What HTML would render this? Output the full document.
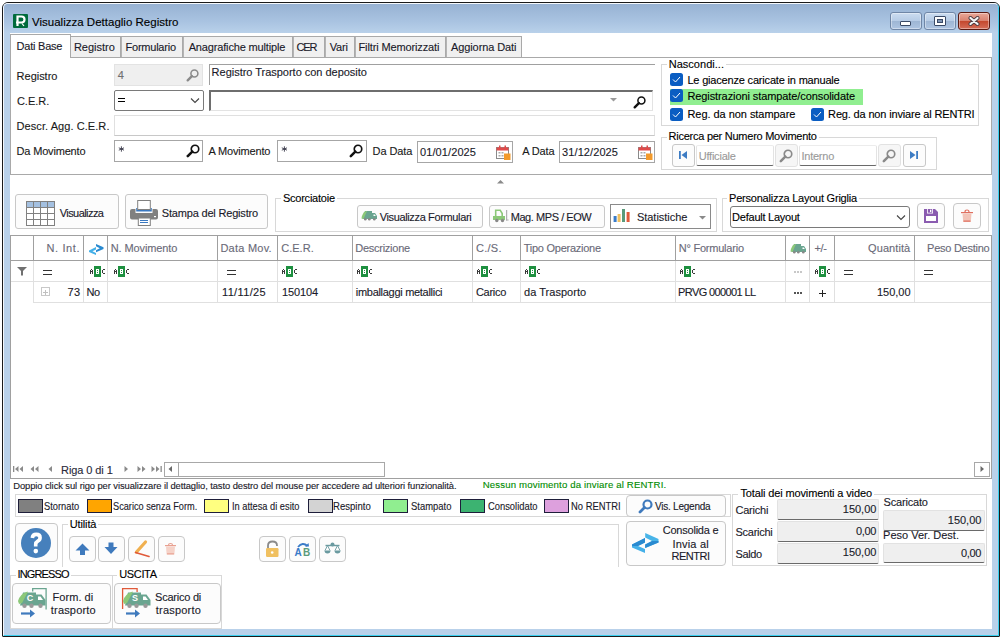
<!DOCTYPE html><html><head><meta charset="utf-8"><title>Visualizza Dettaglio Registro</title><style>
html,body{margin:0;padding:0;background:#fff;width:1001px;height:639px;overflow:hidden;position:relative;font-family:"Liberation Sans",sans-serif;}
.t{position:absolute;white-space:nowrap;line-height:1;-webkit-text-stroke:0.12px currentColor;}
.b{position:absolute;box-sizing:border-box;}
.s{position:absolute;overflow:visible;}
</style></head><body>
<div class="b" style="left:2px;top:2px;width:998px;height:635px;background:#b9d1ea;border:1px solid #1a1a1a;border-radius:6px 6px 1px 1px;"></div>
<div class="b" style="left:3px;top:3px;width:996px;height:633px;border-top:1px solid #f4f8fc;border-left:1px solid #f4f8fc;border-right:1px solid #3ad0f0;border-bottom:1px solid #3ad0f0;border-radius:5px 5px 0 0;"></div>
<div class="b" style="left:4px;top:4px;width:994px;height:29px;background:linear-gradient(#97b2d3,#a9c3e1 60%,#b9d1ea);border-radius:4px 4px 0 0;"></div>
<div class="b" style="left:10px;top:33px;width:982px;height:596px;background:#fff;"></div>
<div class="b" style="left:13px;top:14px;width:15px;height:14px;background:#006b3c;border-radius:1px;"></div>
<svg class="s" style="left:15px;top:15px;" width="11" height="12" viewBox="0 0 11 12"><path d="M2.5 11 V1.5 H6.5 Q9.5 1.5 9.5 4.5 Q9.5 7.5 6.5 7.5 H1" fill="none" stroke="#fff" stroke-width="2.2"/><path d="M7 8.5 L9 11" stroke="#fff" stroke-width="1.2"/></svg>
<div class="t" style="left:31.94px;top:17.00px;font-size:11.5px;color:#000;letter-spacing:0.013px;">Visualizza Dettaglio Registro</div>
<div class="b" style="left:890px;top:12px;width:32px;height:18px;background:linear-gradient(#cbdcf0 0%,#b7cce6 48%,#9eb6d4 52%,#aec5e2 100%);border:1px solid #6f86a6;border-radius:3px;box-shadow:inset 0 0 0 1px rgba(255,255,255,.4);"><div style="position:absolute;left:9px;top:8px;width:11px;height:5px;background:#fff;border:1px solid #3a4a66;border-radius:1px;box-sizing:border-box"></div></div>
<div class="b" style="left:924px;top:12px;width:32px;height:18px;background:linear-gradient(#cbdcf0 0%,#b7cce6 48%,#9eb6d4 52%,#aec5e2 100%);border:1px solid #6f86a6;border-radius:3px;box-shadow:inset 0 0 0 1px rgba(255,255,255,.4);"><div style="position:absolute;left:9px;top:3px;width:12px;height:10px;border:1px solid #3a4a66;background:#fff;box-sizing:border-box;border-radius:1px"><div style="position:absolute;left:2px;top:2px;width:6px;height:4px;background:#7f95b4;border:1px solid #3a4a66;box-sizing:border-box"></div></div></div>
<div class="b" style="left:958px;top:12px;width:32px;height:18px;background:linear-gradient(#eaa898 0%,#d98270 48%,#c4482e 52%,#d56d58 100%);border:1px solid #5a1a12;border-radius:3px;box-shadow:inset 0 0 0 1px rgba(255,255,255,.4);"><svg style="position:absolute;left:9px;top:3px" width="14" height="11" viewBox="0 0 14 11"><path d="M2.5 2 L9.5 8 M9.5 2 L2.5 8" stroke="#4a3a40" stroke-width="4" stroke-linecap="round"/><path d="M2.5 2 L9.5 8 M9.5 2 L2.5 8" stroke="#f4f4f4" stroke-width="2.3" stroke-linecap="round"/></svg></div>
<div class="b" style="left:10px;top:57px;width:982px;height:118px;border:1px solid #a9a9a9;background:#fff;"></div>
<div class="b" style="left:70px;top:36px;width:51px;height:22px;background:#f0f0f0;border:1px solid #a9a9a9;"></div>
<div class="t" style="left:73.92px;top:42.00px;font-size:11px;color:#1a1a2a;letter-spacing:-0.008px;">Registro</div>
<div class="b" style="left:120px;top:36px;width:63px;height:22px;background:#f0f0f0;border:1px solid #a9a9a9;"></div>
<div class="t" style="left:125.52px;top:42.00px;font-size:11px;color:#1a1a2a;letter-spacing:-0.229px;">Formulario</div>
<div class="b" style="left:182px;top:36px;width:111px;height:22px;background:#f0f0f0;border:1px solid #a9a9a9;"></div>
<div class="t" style="left:188.70px;top:42.00px;font-size:11px;color:#1a1a2a;letter-spacing:-0.159px;">Anagrafiche multiple</div>
<div class="b" style="left:292px;top:36px;width:33px;height:22px;background:#f0f0f0;border:1px solid #a9a9a9;"></div>
<div class="t" style="left:296.55px;top:42.00px;font-size:11px;color:#1a1a2a;letter-spacing:-1.133px;">CER</div>
<div class="b" style="left:324px;top:36px;width:31px;height:22px;background:#f0f0f0;border:1px solid #a9a9a9;"></div>
<div class="t" style="left:329.64px;top:42.00px;font-size:11px;color:#1a1a2a;letter-spacing:-0.177px;">Vari</div>
<div class="b" style="left:354px;top:36px;width:92px;height:22px;background:#f0f0f0;border:1px solid #a9a9a9;"></div>
<div class="t" style="left:358.52px;top:42.00px;font-size:11px;color:#1a1a2a;letter-spacing:-0.130px;">Filtri Memorizzati</div>
<div class="b" style="left:445px;top:36px;width:77px;height:22px;background:#f0f0f0;border:1px solid #a9a9a9;"></div>
<div class="t" style="left:451.00px;top:42.00px;font-size:11px;color:#1a1a2a;letter-spacing:-0.099px;">Aggiorna Dati</div>
<div class="b" style="left:121px;top:37px;width:1px;height:20px;background:#b4b4b4;"></div>
<div class="b" style="left:183px;top:37px;width:1px;height:20px;background:#b4b4b4;"></div>
<div class="b" style="left:293px;top:37px;width:1px;height:20px;background:#b4b4b4;"></div>
<div class="b" style="left:325px;top:37px;width:1px;height:20px;background:#b4b4b4;"></div>
<div class="b" style="left:355px;top:37px;width:1px;height:20px;background:#b4b4b4;"></div>
<div class="b" style="left:446px;top:37px;width:1px;height:20px;background:#b4b4b4;"></div>
<div class="b" style="left:10px;top:34px;width:61px;height:24px;background:#fff;border:1px solid #a9a9a9;border-bottom:none;"></div>
<div class="t" style="left:16.62px;top:41.00px;font-size:11px;color:#1a1a2a;letter-spacing:-0.233px;">Dati Base</div>
<div class="t" style="left:16.62px;top:71.00px;font-size:11px;color:#1a1a1a;letter-spacing:-0.022px;">Registro</div>
<div class="t" style="left:16.95px;top:95.70px;font-size:11px;color:#1a1a1a;letter-spacing:-0.011px;">C.E.R.</div>
<div class="t" style="left:16.62px;top:121.00px;font-size:11px;color:#1a1a1a;letter-spacing:0.066px;">Descr. Agg. C.E.R.</div>
<div class="t" style="left:16.62px;top:146.40px;font-size:11px;color:#1a1a1a;letter-spacing:-0.180px;">Da Movimento</div>
<div class="t" style="left:208.60px;top:146.40px;font-size:11px;color:#1a1a1a;letter-spacing:-0.174px;">A Movimento</div>
<div class="t" style="left:372.62px;top:146.40px;font-size:11px;color:#1a1a1a;letter-spacing:-0.106px;">Da Data</div>
<div class="t" style="left:522.20px;top:146.40px;font-size:11px;color:#1a1a1a;letter-spacing:-0.140px;">A Data</div>
<div class="b" style="left:114px;top:64px;width:89px;height:22px;background:#efefef;border:1px solid #e3e3e3;"></div>
<div class="t" style="left:117.78px;top:70.00px;font-size:11px;color:#707070;letter-spacing:-0.252px;">4</div>
<svg class="s" style="left:186px;top:68px;" width="14" height="14" viewBox="0 0 14 14"><circle cx="8.40" cy="5.60" r="3.50" fill="none" stroke="#8a8a8a" stroke-width="1.54"/><path d="M5.88 8.12 L1.68 12.32" stroke="#8a8a8a" stroke-width="2.38" stroke-linecap="round"/></svg>
<div class="b" style="left:209px;top:64px;width:446px;height:21px;border-top:1px solid #a0a0a0;border-left:1px solid #a0a0a0;"></div>
<div class="t" style="left:211.62px;top:67.00px;font-size:11px;color:#1a1a2a;letter-spacing:-0.020px;">Registro Trasporto con deposito</div>
<div class="b" style="left:114px;top:90px;width:90px;height:21px;border:1.5px solid #7a7a7a;border-radius:2px;"></div>
<div class="b" style="left:118px;top:98px;width:7px;height:1px;background:#000;"></div>
<div class="b" style="left:118px;top:101px;width:7px;height:1px;background:#000;"></div>
<svg class="s" style="left:190px;top:97px;" width="10" height="7" viewBox="0 0 10 7"><path d="M1 1.5 L5 5.5 L9 1.5" fill="none" stroke="#444" stroke-width="1.1"/></svg>
<div class="b" style="left:209px;top:90px;width:444px;height:21px;border-top:2px solid #6e6e6e;border-left:2px solid #6e6e6e;border-right:1px solid #e3e3e3;border-bottom:1px solid #e3e3e3;"></div>
<svg class="s" style="left:610px;top:98px;" width="7" height="4" viewBox="0 0 7 4"><path d="M0 0 L7 0 L3.5 3.5 Z" fill="#9a9a9a"/></svg>
<svg class="s" style="left:633px;top:94.5px;" width="14" height="14" viewBox="0 0 14 14"><circle cx="8.40" cy="5.60" r="3.50" fill="none" stroke="#111" stroke-width="1.54"/><path d="M5.88 8.12 L1.68 12.32" stroke="#111" stroke-width="2.38" stroke-linecap="round"/></svg>
<div class="b" style="left:114px;top:115px;width:541px;height:21px;border:1px solid #e0e0e0;border-bottom-color:#c8c8c8;"></div>
<div class="b" style="left:114px;top:140px;width:89px;height:22px;border:1px solid #a6a6a6;"></div>
<svg class="s" style="left:117.8px;top:145.5px;" width="7" height="6" viewBox="0 0 7 6"><path d="M0.8 1.8 L6 4.2 M0.8 4.2 L6 1.8 M3.4 0.3 V5.7" stroke="#3a3a4a" stroke-width="0.9"/></svg>
<svg class="s" style="left:186px;top:143px;" width="15" height="15" viewBox="0 0 15 15"><circle cx="9.00" cy="6.00" r="3.75" fill="none" stroke="#111" stroke-width="1.65"/><path d="M6.30 8.70 L1.80 13.20" stroke="#111" stroke-width="2.55" stroke-linecap="round"/></svg>
<div class="b" style="left:277px;top:140px;width:90px;height:22px;border:1px solid #a6a6a6;"></div>
<svg class="s" style="left:280.8px;top:145.5px;" width="7" height="6" viewBox="0 0 7 6"><path d="M0.8 1.8 L6 4.2 M0.8 4.2 L6 1.8 M3.4 0.3 V5.7" stroke="#3a3a4a" stroke-width="0.9"/></svg>
<svg class="s" style="left:349px;top:143px;" width="15" height="15" viewBox="0 0 15 15"><circle cx="9.00" cy="6.00" r="3.75" fill="none" stroke="#111" stroke-width="1.65"/><path d="M6.30 8.70 L1.80 13.20" stroke="#111" stroke-width="2.55" stroke-linecap="round"/></svg>
<div class="b" style="left:417px;top:141px;width:96px;height:22px;border:1px solid #a6a6a6;"></div>
<div class="t" style="left:420.06px;top:146.80px;font-size:11px;color:#1a1a2a;letter-spacing:0.092px;">01/01/2025</div>
<svg class="s" style="left:496px;top:145px;" width="15" height="15" viewBox="0 0 15 15"><rect x="0.5" y="2.5" width="12" height="11" fill="#fff" stroke="#8a8a8a"/><rect x="0.5" y="2.5" width="12" height="3" fill="#e04a4a"/><rect x="3" y="0.5" width="1.5" height="3" fill="#e04a4a"/><rect x="8.5" y="0.5" width="1.5" height="3" fill="#e04a4a"/><g fill="#aaa"><rect x="2.5" y="7" width="2" height="1.5"/><rect x="5.5" y="7" width="2" height="1.5"/><rect x="2.5" y="10" width="2" height="1.5"/><rect x="5.5" y="10" width="2" height="1.5"/></g><rect x="8" y="8.5" width="6.5" height="6.5" fill="#f39a2a"/></svg>
<div class="b" style="left:559px;top:141px;width:96px;height:22px;border:1px solid #a6a6a6;"></div>
<div class="t" style="left:562.12px;top:146.80px;font-size:11px;color:#1a1a2a;letter-spacing:0.086px;">31/12/2025</div>
<svg class="s" style="left:638px;top:145px;" width="15" height="15" viewBox="0 0 15 15"><rect x="0.5" y="2.5" width="12" height="11" fill="#fff" stroke="#8a8a8a"/><rect x="0.5" y="2.5" width="12" height="3" fill="#e04a4a"/><rect x="3" y="0.5" width="1.5" height="3" fill="#e04a4a"/><rect x="8.5" y="0.5" width="1.5" height="3" fill="#e04a4a"/><g fill="#aaa"><rect x="2.5" y="7" width="2" height="1.5"/><rect x="5.5" y="7" width="2" height="1.5"/><rect x="2.5" y="10" width="2" height="1.5"/><rect x="5.5" y="10" width="2" height="1.5"/></g><rect x="8" y="8.5" width="6.5" height="6.5" fill="#f39a2a"/></svg>
<div class="b" style="left:661px;top:64px;width:318px;height:62px;border:1px solid #d8d8d8;"></div>
<div class="t" style="left:668.72px;top:58.50px;font-size:11px;color:#000;letter-spacing:0.021px;background:#fff;padding:0 2px;margin-left:-2px;">Nascondi...</div>
<div class="b" style="left:670px;top:89px;width:193px;height:16px;background:#90ee90;"></div>
<div class="b" style="left:670px;top:73px;width:13px;height:13px;background:#0a5dc2;border-radius:2.5px;"><svg style="position:absolute;left:2px;top:3px" width="9" height="7" viewBox="0 0 9 7"><path d="M1 3.5 L3.5 6 L8 1" fill="none" stroke="#fff" stroke-width="1"/></svg></div>
<div class="t" style="left:687.42px;top:75.00px;font-size:11px;color:#000;letter-spacing:-0.181px;">Le giacenze caricate in manuale</div>
<div class="b" style="left:670px;top:89px;width:13px;height:13px;background:#0a5dc2;border-radius:2.5px;"><svg style="position:absolute;left:2px;top:3px" width="9" height="7" viewBox="0 0 9 7"><path d="M1 3.5 L3.5 6 L8 1" fill="none" stroke="#fff" stroke-width="1"/></svg></div>
<div class="t" style="left:687.42px;top:91.00px;font-size:11px;color:#000;letter-spacing:-0.091px;">Registrazioni stampate/consolidate</div>
<div class="b" style="left:670px;top:108px;width:13px;height:13px;background:#0a5dc2;border-radius:2.5px;"><svg style="position:absolute;left:2px;top:3px" width="9" height="7" viewBox="0 0 9 7"><path d="M1 3.5 L3.5 6 L8 1" fill="none" stroke="#fff" stroke-width="1"/></svg></div>
<div class="t" style="left:687.42px;top:109.20px;font-size:11px;color:#000;letter-spacing:-0.043px;">Reg. da non stampare</div>
<div class="b" style="left:811px;top:108px;width:13px;height:13px;background:#0a5dc2;border-radius:2.5px;"><svg style="position:absolute;left:2px;top:3px" width="9" height="7" viewBox="0 0 9 7"><path d="M1 3.5 L3.5 6 L8 1" fill="none" stroke="#fff" stroke-width="1"/></svg></div>
<div class="t" style="left:828.12px;top:109.20px;font-size:11px;color:#000;letter-spacing:-0.161px;">Reg. da non inviare al RENTRI</div>
<div class="b" style="left:661px;top:137px;width:276px;height:33px;border:1px solid #d8d8d8;"></div>
<div class="t" style="left:668.62px;top:131.00px;font-size:11px;color:#000;letter-spacing:-0.257px;background:#fff;padding:0 2px;margin-left:-2px;">Ricerca per Numero Movimento</div>
<div class="b" style="left:672px;top:144px;width:23px;height:23px;border:1px solid #c8c8c8;border-radius:3px;background:#fcfcfc;"></div>
<svg class="s" style="left:678px;top:150px;" width="10" height="10" viewBox="0 0 10 10"><rect x="1" y="1" width="1.8" height="8" fill="#3d7cc4"/><path d="M9 1 L9 9 L3.5 5 Z" fill="#3d7cc4"/></svg>
<div class="b" style="left:696px;top:145px;width:78px;height:21px;border-bottom:1.5px solid #6a6a6a;border-left:1px solid #e3e3e3;border-top:1px solid #ececec;border-right:1px solid #e3e3e3;border-radius:2px;"></div>
<div class="t" style="left:698.67px;top:150.50px;font-size:11px;color:#9a9a9a;letter-spacing:-0.212px;">Ufficiale</div>
<div class="b" style="left:775px;top:144px;width:23px;height:23px;border:1px solid #c8c8c8;border-radius:3px;background:#fcfcfc;background:#f6f6f6;border-color:#e2e2e2;"></div>
<svg class="s" style="left:779px;top:148px;" width="15" height="15" viewBox="0 0 15 15"><circle cx="9.00" cy="6.00" r="3.75" fill="none" stroke="#8a8a8a" stroke-width="1.65"/><path d="M6.30 8.70 L1.80 13.20" stroke="#8a8a8a" stroke-width="2.55" stroke-linecap="round"/></svg>
<div class="b" style="left:799px;top:145px;width:78px;height:21px;border-bottom:1.5px solid #6a6a6a;border-left:1px solid #e3e3e3;border-top:1px solid #ececec;border-right:1px solid #e3e3e3;border-radius:2px;"></div>
<div class="t" style="left:801.51px;top:150.50px;font-size:11px;color:#9a9a9a;letter-spacing:-0.246px;">Interno</div>
<div class="b" style="left:878px;top:144px;width:23px;height:23px;border:1px solid #c8c8c8;border-radius:3px;background:#fcfcfc;background:#f6f6f6;border-color:#e2e2e2;"></div>
<svg class="s" style="left:882px;top:148px;" width="15" height="15" viewBox="0 0 15 15"><circle cx="9.00" cy="6.00" r="3.75" fill="none" stroke="#8a8a8a" stroke-width="1.65"/><path d="M6.30 8.70 L1.80 13.20" stroke="#8a8a8a" stroke-width="2.55" stroke-linecap="round"/></svg>
<div class="b" style="left:903px;top:144px;width:23px;height:23px;border:1px solid #c8c8c8;border-radius:3px;background:#fcfcfc;"></div>
<svg class="s" style="left:909px;top:150px;" width="10" height="10" viewBox="0 0 10 10"><rect x="7.2" y="1" width="1.8" height="8" fill="#3d7cc4"/><path d="M1 1 L1 9 L6.5 5 Z" fill="#3d7cc4"/></svg>
<svg class="s" style="left:497px;top:179.5px;" width="7" height="4" viewBox="0 0 7 4"><path d="M0 3.5 L3.5 0 L7 3.5 Z" fill="#8a8a8a"/></svg>
<div class="b" style="left:15px;top:194px;width:104px;height:35px;border:1px solid #c8c8c8;border-radius:3px;background:#fcfcfc;"></div>
<svg class="s" style="left:26px;top:201px;" width="29" height="25" viewBox="0 0 29 25"><rect x="0.5" y="0.5" width="28" height="24" fill="#fff" stroke="#808080"/><rect x="1" y="1" width="27" height="6" fill="#a4c0e0"/><path d="M7.5 0.5 V24.5" stroke="#808080"/><path d="M14.5 0.5 V24.5" stroke="#808080"/><path d="M21.5 0.5 V24.5" stroke="#808080"/><path d="M0.5 6.5 H28.5" stroke="#808080"/><path d="M0.5 12.5 H28.5" stroke="#808080"/><path d="M0.5 18.5 H28.5" stroke="#808080"/></svg>
<div class="t" style="left:59.74px;top:207.80px;font-size:11px;color:#1a1a2a;letter-spacing:-0.564px;">Visualizza</div>
<div class="b" style="left:125px;top:194px;width:143px;height:35px;border:1px solid #c8c8c8;border-radius:3px;background:#fcfcfc;"></div>
<svg class="s" style="left:126px;top:196px;" width="36" height="32" viewBox="0 0 36 32"><path d="M6 13 H9.5 V17 H26.5 V13 H30 Q32 13 32 15 V21.5 Q32 23.5 30 23.5 H6 Q4 23.5 4 21.5 V15 Q4 13 6 13 Z" fill="#808080"/><path d="M10.2 12 V15.5 H25.8 V12 H24.5 V14 H11.5 V12 Z" fill="#3a78c0"/><rect x="11.7" y="4.5" width="12.6" height="9" fill="#fff" stroke="#808080"/><rect x="28" y="20" width="2" height="1.2" fill="#fff"/><rect x="12.3" y="22" width="12" height="7.5" fill="#fff" stroke="#808080"/><rect x="14" y="24" width="8" height="1" fill="#3a78c0"/><rect x="14" y="26" width="8" height="1" fill="#3a78c0"/></svg>
<div class="t" style="left:161.81px;top:207.80px;font-size:11px;color:#1a1a2a;letter-spacing:-0.185px;">Stampa del Registro</div>
<div class="b" style="left:275px;top:198px;width:442px;height:34px;border:1px solid #d8d8d8;"></div>
<div class="t" style="left:282.90px;top:193.00px;font-size:11px;color:#000;letter-spacing:-0.226px;background:#fff;padding:0 2px;margin-left:-2px;">Scorciatoie</div>
<div class="b" style="left:357px;top:205px;width:126px;height:23px;border:1px solid #c8c8c8;border-radius:3px;background:#fcfcfc;"></div>
<svg class="s" style="left:361px;top:210.3px;" width="17" height="11" viewBox="0 0 17 11"><path d="M4 1 H11 V9 H1.5 L2.5 4 Z" fill="#6aa590"/><path d="M0.5 8.5 Q1 3 5 1 L6 1 L2.5 9 Z" fill="#8cc878"/><path d="M11 3 H14 L16 6 V9 H11 Z" fill="#6aa590"/><path d="M12.5 4.5 H13.8 L14.8 6 H12.5 Z" fill="#fff"/><circle cx="4.3" cy="9.3" r="1.3" fill="#888"/><circle cx="8.3" cy="9.3" r="1.3" fill="#888"/><circle cx="13.3" cy="9.3" r="1.3" fill="#888"/></svg>
<div class="t" style="left:379.64px;top:211.50px;font-size:11px;color:#1a1a2a;letter-spacing:-0.356px;">Visualizza Formulari</div>
<div class="b" style="left:489px;top:205px;width:116px;height:23px;border:1px solid #c8c8c8;border-radius:3px;background:#fcfcfc;"></div>
<svg class="s" style="left:493px;top:209px;" width="17" height="14" viewBox="0 0 17 14"><path d="M2.7 7 V1.2 H7.2 L9.2 4.5 V7" stroke="#8cc878" stroke-width="1.6" fill="none"/><path d="M0 7 H12 V11 H0 Z" fill="#8cc878"/><circle cx="3.8" cy="11.5" r="1.7" fill="#888"/><circle cx="9.5" cy="11.5" r="1.7" fill="#888"/><rect x="13" y="1" width="1.2" height="10.5" fill="#b0b0b0"/><rect x="13" y="10.5" width="2.6" height="1" fill="#b0b0b0"/></svg>
<div class="t" style="left:510.72px;top:212.00px;font-size:11px;color:#1a1a2a;letter-spacing:-0.443px;">Mag. MPS / EOW</div>
<div class="b" style="left:610px;top:204px;width:101px;height:25px;border:1px solid #8a8a8a;background:#fff;"></div>
<svg class="s" style="left:613px;top:208px;" width="17" height="15" viewBox="0 0 17 15"><rect x="0.6" y="8" width="3" height="6" fill="#3a7bc8"/><rect x="4.6" y="6" width="3" height="8" fill="#f0c060"/><rect x="9" y="1" width="3" height="13" fill="#5a9a7a"/><rect x="13.6" y="4" width="3" height="10" fill="#e05a3a"/></svg>
<div class="t" style="left:636.90px;top:211.50px;font-size:11px;color:#1a1a2a;letter-spacing:-0.018px;">Statistiche</div>
<svg class="s" style="left:699px;top:216px;" width="7" height="4" viewBox="0 0 7 4"><path d="M0 0 H7 L3.5 3.5 Z" fill="#8a8a8a"/></svg>
<div class="b" style="left:722px;top:198px;width:267px;height:34px;border:1px solid #d8d8d8;"></div>
<div class="t" style="left:729.12px;top:193.00px;font-size:11px;color:#000;letter-spacing:-0.230px;background:#fff;padding:0 2px;margin-left:-2px;">Personalizza Layout Griglia</div>
<div class="b" style="left:730px;top:206px;width:180px;height:22px;border:1px solid #7a7a7a;border-radius:3px;background:#fff;"></div>
<div class="t" style="left:732.12px;top:211.50px;font-size:11px;color:#000;letter-spacing:-0.242px;">Default Layout</div>
<svg class="s" style="left:896px;top:214px;" width="10" height="7" viewBox="0 0 10 7"><path d="M1 1.5 L5 5.5 L9 1.5" fill="none" stroke="#444" stroke-width="1.1"/></svg>
<div class="b" style="left:917px;top:203px;width:28px;height:26px;border:1px solid #c8c8c8;border-radius:3px;background:#fcfcfc;border-radius:4px;"></div>
<svg class="s" style="left:924px;top:209px;" width="14" height="14" viewBox="0 0 14 14"><path d="M0 0 H11 L14 3 V14 H0 Z" fill="#8a5bb0"/><rect x="3" y="0" width="6" height="4.5" fill="#fff"/><rect x="3.8" y="0" width="4.4" height="3.7" fill="#8a5bb0"/><rect x="6" y="0.7" width="1.3" height="2.3" fill="#fff"/><rect x="2" y="7" width="10" height="5" fill="#fff"/></svg>
<div class="b" style="left:953px;top:203px;width:28px;height:26px;border:1px solid #c8c8c8;border-radius:3px;background:#fcfcfc;border-radius:4px;"></div>
<svg class="s" style="left:961px;top:209px;" width="13" height="14" viewBox="0 0 13 14"><rect x="0" y="3" width="12" height="1.2" fill="#e07060"/><path d="M4 3 Q4 1 6 1 Q8 1 8 3" fill="none" stroke="#e07060" stroke-width="1.2"/><path d="M1.5 4.5 H10.5 L9.8 13 H2.2 Z" fill="#f2c4b8"/><rect x="2.5" y="11.5" width="7" height="1.2" fill="#e07060"/></svg>
<div class="b" style="left:10px;top:235px;width:982px;height:244px;border:1px solid #a0a0a0;background:#fff;"></div>
<div class="b" style="left:11px;top:260px;width:980px;height:1px;background:#a0a0a0;"></div>
<div class="b" style="left:33px;top:236px;width:1px;height:25px;background:#a0a0a0;"></div>
<div class="b" style="left:83px;top:236px;width:1px;height:25px;background:#a0a0a0;"></div>
<div class="b" style="left:107px;top:236px;width:1px;height:25px;background:#a0a0a0;"></div>
<div class="b" style="left:217px;top:236px;width:1px;height:25px;background:#a0a0a0;"></div>
<div class="b" style="left:277px;top:236px;width:1px;height:25px;background:#a0a0a0;"></div>
<div class="b" style="left:352px;top:236px;width:1px;height:25px;background:#a0a0a0;"></div>
<div class="b" style="left:472px;top:236px;width:1px;height:25px;background:#a0a0a0;"></div>
<div class="b" style="left:520px;top:236px;width:1px;height:25px;background:#a0a0a0;"></div>
<div class="b" style="left:675px;top:236px;width:1px;height:25px;background:#a0a0a0;"></div>
<div class="b" style="left:785px;top:236px;width:1px;height:25px;background:#a0a0a0;"></div>
<div class="b" style="left:809px;top:236px;width:1px;height:25px;background:#a0a0a0;"></div>
<div class="b" style="left:834px;top:236px;width:1px;height:25px;background:#a0a0a0;"></div>
<div class="b" style="left:914px;top:236px;width:1px;height:25px;background:#a0a0a0;"></div>
<div class="b" style="left:11px;top:281px;width:980px;height:1px;background:#e0e0e0;"></div>
<div class="b" style="left:33px;top:302px;width:958px;height:1px;background:#e0e0e0;"></div>
<div class="b" style="left:33px;top:261px;width:1px;height:42px;background:#e0e0e0;"></div>
<div class="b" style="left:83px;top:261px;width:1px;height:42px;background:#e0e0e0;"></div>
<div class="b" style="left:107px;top:261px;width:1px;height:42px;background:#e0e0e0;"></div>
<div class="b" style="left:217px;top:261px;width:1px;height:42px;background:#e0e0e0;"></div>
<div class="b" style="left:277px;top:261px;width:1px;height:42px;background:#e0e0e0;"></div>
<div class="b" style="left:352px;top:261px;width:1px;height:42px;background:#e0e0e0;"></div>
<div class="b" style="left:472px;top:261px;width:1px;height:42px;background:#e0e0e0;"></div>
<div class="b" style="left:520px;top:261px;width:1px;height:42px;background:#e0e0e0;"></div>
<div class="b" style="left:675px;top:261px;width:1px;height:42px;background:#e0e0e0;"></div>
<div class="b" style="left:785px;top:261px;width:1px;height:42px;background:#e0e0e0;"></div>
<div class="b" style="left:809px;top:261px;width:1px;height:42px;background:#e0e0e0;"></div>
<div class="b" style="left:834px;top:261px;width:1px;height:42px;background:#e0e0e0;"></div>
<div class="b" style="left:914px;top:261px;width:1px;height:42px;background:#e0e0e0;"></div>
<div class="t" style="right:920.82px;top:243.00px;font-size:11px;color:#6a6a78;letter-spacing:0.617px;">N. Int.</div>
<svg class="s" style="left:89px;top:244px;" width="15" height="11" viewBox="0 0 15 11"><path d="M7 3 L0 6.5 L0 8 L7 11 L7 9 L3.5 7.3 L7 5.5 Z" fill="#45b0e8"/><path d="M7 0 L14.5 3.3 L14.5 5 L7 8.3 L7 6.3 L10.8 4.2 L7 2.2 Z" fill="#2a8ad0"/></svg>
<div class="t" style="left:110.72px;top:243.00px;font-size:11px;color:#6a6a78;letter-spacing:-0.109px;">N. Movimento</div>
<div class="t" style="left:220.42px;top:243.00px;font-size:11px;color:#6a6a78;letter-spacing:0.242px;">Data Mov.</div>
<div class="t" style="left:281.25px;top:243.00px;font-size:11px;color:#6a6a78;letter-spacing:0.009px;">C.E.R.</div>
<div class="t" style="left:355.22px;top:243.00px;font-size:11px;color:#6a6a78;letter-spacing:-0.253px;">Descrizione</div>
<div class="t" style="left:475.95px;top:243.00px;font-size:11px;color:#6a6a78;letter-spacing:0.266px;">C./S.</div>
<div class="t" style="left:523.78px;top:243.00px;font-size:11px;color:#6a6a78;letter-spacing:-0.258px;">Tipo Operazione</div>
<div class="t" style="left:678.72px;top:243.00px;font-size:11px;color:#6a6a78;letter-spacing:-0.222px;">N° Formulario</div>
<svg class="s" style="left:790px;top:242.5px;" width="17" height="11" viewBox="0 0 17 11"><path d="M4 1 H11 V9 H1.5 L2.5 4 Z" fill="#6aa590"/><path d="M0.5 8.5 Q1 3 5 1 L6 1 L2.5 9 Z" fill="#8cc878"/><path d="M11 3 H14 L16 6 V9 H11 Z" fill="#6aa590"/><path d="M12.5 4.5 H13.8 L14.8 6 H12.5 Z" fill="#fff"/><circle cx="4.3" cy="9.3" r="1.3" fill="#888"/><circle cx="8.3" cy="9.3" r="1.3" fill="#888"/><circle cx="13.3" cy="9.3" r="1.3" fill="#888"/></svg>
<div class="t" style="left:814.45px;top:243.00px;font-size:11px;color:#6a6a78;letter-spacing:-0.272px;">+/-</div>
<div class="t" style="right:90.72px;top:243.00px;font-size:11px;color:#6a6a78;letter-spacing:0.074px;">Quantità</div>
<div class="b" style="left:915px;top:236px;width:76px;height:24px;overflow:hidden">
<div class="t" style="left:12.12px;top:7.00px;font-size:11px;color:#6a6a78;letter-spacing:-0.262px;">Peso Destino</div>
</div>
<svg class="s" style="left:17px;top:267px;" width="11" height="9" viewBox="0 0 11 9"><path d="M0 0 H10 L6 4 V8.5 H4 V4 Z" fill="#707070"/></svg>
<div class="b" style="left:43px;top:270px;width:9px;height:1.1999999999999886px;background:#333;"></div>
<div class="b" style="left:43px;top:273.5px;width:9px;height:1.1999999999999886px;background:#333;"></div>
<svg class="s" style="left:89px;top:266px;shape-rendering:crispEdges" width="17" height="12" viewBox="0 0 17 12"><path d="M1 8V4H2V3H3V4H4V8H3V6H2V8Z M2 5H3V4H2Z" fill="#3a3a3a" fill-rule="evenodd"/><rect x="5" y="0" width="7" height="11" rx="1" fill="#1e9040"/><rect x="7" y="3" width="3" height="5" fill="#fff"/><rect x="8" y="4" width="1" height="1" fill="#1e9040"/><rect x="8" y="6" width="1" height="1" fill="#1e9040"/><path d="M14 3H16V4H14V7H16V8H14V7H13V4H14Z" fill="#3a3a3a"/></svg>
<svg class="s" style="left:113px;top:266px;shape-rendering:crispEdges" width="17" height="12" viewBox="0 0 17 12"><path d="M1 8V4H2V3H3V4H4V8H3V6H2V8Z M2 5H3V4H2Z" fill="#3a3a3a" fill-rule="evenodd"/><rect x="5" y="0" width="7" height="11" rx="1" fill="#1e9040"/><rect x="7" y="3" width="3" height="5" fill="#fff"/><rect x="8" y="4" width="1" height="1" fill="#1e9040"/><rect x="8" y="6" width="1" height="1" fill="#1e9040"/><path d="M14 3H16V4H14V7H16V8H14V7H13V4H14Z" fill="#3a3a3a"/></svg>
<div class="b" style="left:227px;top:270px;width:9px;height:1.1999999999999886px;background:#333;"></div>
<div class="b" style="left:227px;top:273.5px;width:9px;height:1.1999999999999886px;background:#333;"></div>
<svg class="s" style="left:281px;top:266px;shape-rendering:crispEdges" width="17" height="12" viewBox="0 0 17 12"><path d="M1 8V4H2V3H3V4H4V8H3V6H2V8Z M2 5H3V4H2Z" fill="#3a3a3a" fill-rule="evenodd"/><rect x="5" y="0" width="7" height="11" rx="1" fill="#1e9040"/><rect x="7" y="3" width="3" height="5" fill="#fff"/><rect x="8" y="4" width="1" height="1" fill="#1e9040"/><rect x="8" y="6" width="1" height="1" fill="#1e9040"/><path d="M14 3H16V4H14V7H16V8H14V7H13V4H14Z" fill="#3a3a3a"/></svg>
<svg class="s" style="left:356px;top:266px;shape-rendering:crispEdges" width="17" height="12" viewBox="0 0 17 12"><path d="M1 8V4H2V3H3V4H4V8H3V6H2V8Z M2 5H3V4H2Z" fill="#3a3a3a" fill-rule="evenodd"/><rect x="5" y="0" width="7" height="11" rx="1" fill="#1e9040"/><rect x="7" y="3" width="3" height="5" fill="#fff"/><rect x="8" y="4" width="1" height="1" fill="#1e9040"/><rect x="8" y="6" width="1" height="1" fill="#1e9040"/><path d="M14 3H16V4H14V7H16V8H14V7H13V4H14Z" fill="#3a3a3a"/></svg>
<svg class="s" style="left:476px;top:266px;shape-rendering:crispEdges" width="17" height="12" viewBox="0 0 17 12"><path d="M1 8V4H2V3H3V4H4V8H3V6H2V8Z M2 5H3V4H2Z" fill="#3a3a3a" fill-rule="evenodd"/><rect x="5" y="0" width="7" height="11" rx="1" fill="#1e9040"/><rect x="7" y="3" width="3" height="5" fill="#fff"/><rect x="8" y="4" width="1" height="1" fill="#1e9040"/><rect x="8" y="6" width="1" height="1" fill="#1e9040"/><path d="M14 3H16V4H14V7H16V8H14V7H13V4H14Z" fill="#3a3a3a"/></svg>
<svg class="s" style="left:524px;top:266px;shape-rendering:crispEdges" width="17" height="12" viewBox="0 0 17 12"><path d="M1 8V4H2V3H3V4H4V8H3V6H2V8Z M2 5H3V4H2Z" fill="#3a3a3a" fill-rule="evenodd"/><rect x="5" y="0" width="7" height="11" rx="1" fill="#1e9040"/><rect x="7" y="3" width="3" height="5" fill="#fff"/><rect x="8" y="4" width="1" height="1" fill="#1e9040"/><rect x="8" y="6" width="1" height="1" fill="#1e9040"/><path d="M14 3H16V4H14V7H16V8H14V7H13V4H14Z" fill="#3a3a3a"/></svg>
<svg class="s" style="left:679px;top:266px;shape-rendering:crispEdges" width="17" height="12" viewBox="0 0 17 12"><path d="M1 8V4H2V3H3V4H4V8H3V6H2V8Z M2 5H3V4H2Z" fill="#3a3a3a" fill-rule="evenodd"/><rect x="5" y="0" width="7" height="11" rx="1" fill="#1e9040"/><rect x="7" y="3" width="3" height="5" fill="#fff"/><rect x="8" y="4" width="1" height="1" fill="#1e9040"/><rect x="8" y="6" width="1" height="1" fill="#1e9040"/><path d="M14 3H16V4H14V7H16V8H14V7H13V4H14Z" fill="#3a3a3a"/></svg>
<div class="b" style="left:794px;top:271px;width:2px;height:2px;background:#c8c8c8;"></div>
<div class="b" style="left:797px;top:271px;width:2px;height:2px;background:#c8c8c8;"></div>
<div class="b" style="left:800px;top:271px;width:2px;height:2px;background:#c8c8c8;"></div>
<svg class="s" style="left:814px;top:266px;shape-rendering:crispEdges" width="17" height="12" viewBox="0 0 17 12"><path d="M1 8V4H2V3H3V4H4V8H3V6H2V8Z M2 5H3V4H2Z" fill="#3a3a3a" fill-rule="evenodd"/><rect x="5" y="0" width="7" height="11" rx="1" fill="#1e9040"/><rect x="7" y="3" width="3" height="5" fill="#fff"/><rect x="8" y="4" width="1" height="1" fill="#1e9040"/><rect x="8" y="6" width="1" height="1" fill="#1e9040"/><path d="M14 3H16V4H14V7H16V8H14V7H13V4H14Z" fill="#3a3a3a"/></svg>
<div class="b" style="left:844px;top:270px;width:9px;height:1.1999999999999886px;background:#333;"></div>
<div class="b" style="left:844px;top:273.5px;width:9px;height:1.1999999999999886px;background:#333;"></div>
<div class="b" style="left:924px;top:270px;width:9px;height:1.1999999999999886px;background:#333;"></div>
<div class="b" style="left:924px;top:273.5px;width:9px;height:1.1999999999999886px;background:#333;"></div>
<div class="b" style="left:41px;top:287px;width:9px;height:9px;border:1px solid #c8c8c8;"><div style="position:absolute;left:1px;top:3.5px;width:5px;height:1px;background:#c0c0c0"></div><div style="position:absolute;left:3px;top:1.5px;width:1px;height:5px;background:#c0c0c0"></div></div>
<div class="t" style="right:920.55px;top:287.00px;font-size:11px;color:#1a1a2a;letter-spacing:0.380px;">73</div>
<div class="t" style="left:86.62px;top:287.00px;font-size:11px;color:#1a1a2a;letter-spacing:-0.572px;">No</div>
<div class="t" style="left:221.98px;top:287.00px;font-size:11px;color:#1a1a2a;letter-spacing:0.367px;">11/11/25</div>
<div class="t" style="left:281.88px;top:287.00px;font-size:11px;color:#1a1a2a;letter-spacing:-0.117px;">150104</div>
<div class="t" style="left:355.79px;top:287.00px;font-size:11px;color:#1a1a2a;letter-spacing:-0.293px;">imballaggi metallici</div>
<div class="t" style="left:475.95px;top:287.00px;font-size:11px;color:#1a1a2a;letter-spacing:-0.277px;">Carico</div>
<div class="t" style="left:524.06px;top:287.00px;font-size:11px;color:#1a1a2a;letter-spacing:0.029px;">da Trasporto</div>
<div class="t" style="left:678.12px;top:287.00px;font-size:11px;color:#1a1a2a;letter-spacing:-0.616px;">PRVG 000001 LL</div>
<div class="b" style="left:794px;top:292px;width:2px;height:2px;background:#555;"></div>
<div class="b" style="left:797px;top:292px;width:2px;height:2px;background:#555;"></div>
<div class="b" style="left:800px;top:292px;width:2px;height:2px;background:#555;"></div>
<div class="b" style="left:819px;top:293px;width:7px;height:1px;background:#222;"></div>
<div class="b" style="left:822px;top:290px;width:1px;height:7px;background:#222;"></div>
<div class="t" style="right:90.44px;top:287.00px;font-size:11px;color:#1a1a2a;letter-spacing:-0.010px;">150,00</div>
<svg class="s" style="left:13px;top:466px;" width="11" height="7" viewBox="0 0 11 7"><rect x="0" y="0" width="1.3" height="6" fill="#8a8a8a"/><path d="M5.5 0 V6 L2 3 Z M10 0 V6 L6.5 3 Z" fill="#8a8a8a"/></svg>
<svg class="s" style="left:30px;top:466px;" width="9" height="7" viewBox="0 0 9 7"><path d="M4 0 V6 L0.5 3 Z M8.5 0 V6 L5 3 Z" fill="#8a8a8a"/></svg>
<svg class="s" style="left:48px;top:466px;" width="5" height="7" viewBox="0 0 5 7"><path d="M4 0 V6 L0.5 3 Z" fill="#8a8a8a"/></svg>
<div class="t" style="left:61.12px;top:465.00px;font-size:11px;color:#2a2a3a;letter-spacing:-0.091px;">Riga 0 di 1</div>
<svg class="s" style="left:124px;top:466px;" width="5" height="7" viewBox="0 0 5 7"><path d="M0.5 0 V6 L4 3 Z" fill="#8a8a8a"/></svg>
<svg class="s" style="left:137px;top:466px;" width="9" height="7" viewBox="0 0 9 7"><path d="M0.5 0 V6 L4 3 Z M5 0 V6 L8.5 3 Z" fill="#8a8a8a"/></svg>
<svg class="s" style="left:151px;top:466px;" width="11" height="7" viewBox="0 0 11 7"><path d="M0.5 0 V6 L4 3 Z M5 0 V6 L8.5 3 Z" fill="#8a8a8a"/><rect x="9.5" y="0" width="1.3" height="6" fill="#8a8a8a"/></svg>
<div class="b" style="left:164px;top:462px;width:221px;height:15px;border:1px solid #a8a8a8;"></div>
<div class="b" style="left:178px;top:462px;width:1px;height:15px;background:#a8a8a8;"></div>
<svg class="s" style="left:168px;top:466px;" width="5" height="7" viewBox="0 0 5 7"><path d="M4 0 V6 L0.5 3 Z" fill="#6a6a6a"/></svg>
<div class="b" style="left:974px;top:462px;width:16px;height:15px;border:1px solid #a8a8a8;"></div>
<svg class="s" style="left:980px;top:466px;" width="5" height="7" viewBox="0 0 5 7"><path d="M0.5 0 V6 L4 3 Z" fill="#6a6a6a"/></svg>
<div class="t" style="left:13.25px;top:481.00px;font-size:9.4px;color:#1a1a2a;letter-spacing:-0.079px;">Doppio click sul rigo per visualizzare il dettaglio, tasto destro del mouse per accedere ad ulteriori funzionalità.</div>
<div class="t" style="left:482.73px;top:480.00px;font-size:9.6px;color:#008c00;letter-spacing:0.160px;">Nessun movimento da inviare al RENTRI.</div>
<div class="b" style="left:15px;top:494px;width:716px;height:23px;border:1px solid #d8d8d8;"></div>
<div class="b" style="left:18px;top:499px;width:25px;height:14px;background:#808080;border:1px solid #1e1e3a;"></div>
<div class="t" style="left:43.58px;top:502.00px;font-size:10.3px;color:#1a1a2a;transform:scaleX(0.9039);transform-origin:0 0;">Stornato</div>
<div class="b" style="left:87px;top:499px;width:25px;height:14px;background:#ffa500;border:1px solid #1e1e3a;"></div>
<div class="t" style="left:112.59px;top:502.00px;font-size:10.3px;color:#1a1a2a;transform:scaleX(0.8919);transform-origin:0 0;">Scarico senza Form.</div>
<div class="b" style="left:204px;top:499px;width:25px;height:14px;background:#ffff80;border:1px solid #1e1e3a;"></div>
<div class="t" style="left:231.57px;top:502.00px;font-size:10.3px;color:#1a1a2a;transform:scaleX(0.8989);transform-origin:0 0;">In attesa di esito</div>
<div class="b" style="left:308px;top:499px;width:25px;height:14px;background:#d3d3d3;border:1px solid #1e1e3a;"></div>
<div class="t" style="left:333.23px;top:502.00px;font-size:10.3px;color:#1a1a2a;transform:scaleX(0.9290);transform-origin:0 0;">Respinto</div>
<div class="b" style="left:383px;top:499px;width:25px;height:14px;background:#90ee90;border:1px solid #1e1e3a;"></div>
<div class="t" style="left:410.58px;top:502.00px;font-size:10.3px;color:#1a1a2a;transform:scaleX(0.9165);transform-origin:0 0;">Stampato</div>
<div class="b" style="left:460px;top:499px;width:25px;height:14px;background:#3cb371;border:1px solid #1e1e3a;"></div>
<div class="t" style="left:487.53px;top:502.00px;font-size:10.3px;color:#1a1a2a;transform:scaleX(0.9091);transform-origin:0 0;">Consolidato</div>
<div class="b" style="left:544px;top:499px;width:25px;height:14px;background:#dda0dd;border:1px solid #1e1e3a;"></div>
<div class="t" style="left:571.25px;top:502.00px;font-size:10.3px;color:#1a1a2a;transform:scaleX(0.9129);transform-origin:0 0;">No RENTRI</div>
<div class="b" style="left:626px;top:495px;width:100px;height:22px;border:1px solid #c8c8c8;border-radius:3px;background:#fcfcfc;border-radius:4px;"></div>
<svg class="s" style="left:638px;top:499px;" width="15" height="15" viewBox="0 0 15 15"><circle cx="9.5" cy="5.5" r="4" fill="none" stroke="#3f7abd" stroke-width="2.2"/><path d="M6.5 8.5 L2 13" stroke="#3f7abd" stroke-width="2.8" stroke-linecap="round"/></svg>
<div class="t" style="left:654.95px;top:502.00px;font-size:10px;color:#1a1a2a;letter-spacing:-0.223px;">Vis. Legenda</div>
<div class="b" style="left:15px;top:523px;width:43px;height:39px;border:1px solid #c8c8c8;border-radius:3px;background:#fcfcfc;border-radius:4px;"></div>
<svg class="s" style="left:21px;top:528px;" width="30" height="30" viewBox="0 0 30 30"><circle cx="15" cy="15" r="15" fill="#4680bc"/><path d="M11.3 10 Q11.6 6.4 15.3 6.4 Q19.1 6.4 19.1 9.7 Q19.1 11.9 16.8 13.1 Q14.7 14.3 14.7 16.4 V18.6" fill="none" stroke="#fff" stroke-width="3.6"/><circle cx="14.8" cy="23.1" r="2.3" fill="#fff"/></svg>
<div class="b" style="left:62px;top:524px;width:557px;height:43px;border:1px solid #d8d8d8;border-bottom:none;"></div>
<div class="t" style="left:69.67px;top:519.00px;font-size:11px;color:#000;letter-spacing:-0.112px;background:#fff;padding:0 2px;margin-left:-2px;">Utilità</div>
<div class="b" style="left:69px;top:536px;width:27px;height:26px;border:1px solid #c8c8c8;border-radius:3px;background:#fcfcfc;border-radius:4px;"></div>
<div class="b" style="left:98px;top:536px;width:27px;height:26px;border:1px solid #c8c8c8;border-radius:3px;background:#fcfcfc;border-radius:4px;"></div>
<div class="b" style="left:128px;top:536px;width:27px;height:26px;border:1px solid #c8c8c8;border-radius:3px;background:#fcfcfc;border-radius:4px;"></div>
<div class="b" style="left:158px;top:536px;width:27px;height:26px;border:1px solid #c8c8c8;border-radius:3px;background:#fcfcfc;border-radius:4px;"></div>
<div class="b" style="left:259px;top:536px;width:27px;height:26px;border:1px solid #c8c8c8;border-radius:3px;background:#fcfcfc;border-radius:4px;"></div>
<div class="b" style="left:289px;top:536px;width:27px;height:26px;border:1px solid #c8c8c8;border-radius:3px;background:#fcfcfc;border-radius:4px;"></div>
<div class="b" style="left:319px;top:536px;width:27px;height:26px;border:1px solid #c8c8c8;border-radius:3px;background:#fcfcfc;border-radius:4px;"></div>
<svg class="s" style="left:75px;top:543px;" width="15" height="13" viewBox="0 0 15 13"><path d="M7.5 0.5 L14.5 7.5 H10 V12 H5 V7.5 H0.5 Z" fill="#3f7abd"/></svg>
<svg class="s" style="left:104px;top:542px;" width="14" height="13" viewBox="0 0 14 13"><path d="M4.5 0.5 H9.5 V5 H13.5 L7 12 L0.5 5 H4.5 Z" fill="#3f7abd"/></svg>
<svg class="s" style="left:134px;top:540px;" width="17" height="18" viewBox="0 0 17 18"><path d="M2.5 12 L11.5 2" stroke="#f0b050" stroke-width="3.2" stroke-linecap="round"/><path d="M1.5 12.5 L15 16.5" stroke="#e05a3a" stroke-width="1.6" stroke-linecap="round"/></svg>
<svg class="s" style="left:165px;top:543px;" width="12" height="12" viewBox="0 0 12 12"><rect x="0" y="2" width="11" height="1.2" fill="#e8a090"/><path d="M3.5 2 Q3.5 0.5 5.5 0.5 Q7.5 0.5 7.5 2" fill="none" stroke="#e8a090" stroke-width="1.1"/><path d="M1 3.5 H10 L9.4 11.5 H1.6 Z" fill="#f5d2c8"/><rect x="2" y="10.3" width="7" height="1.1" fill="#e8a090"/></svg>
<svg class="s" style="left:265px;top:540px;" width="15" height="18" viewBox="0 0 15 18"><path d="M3 8 V5.5 Q3 1.5 7.5 1.5 Q12 1.5 12 5.5 V6" fill="none" stroke="#8a8a8a" stroke-width="1.8"/><rect x="1" y="8" width="12.5" height="9" rx="1.2" fill="#f0c060"/><circle cx="7.2" cy="12.5" r="1.3" fill="#fff"/></svg>
<svg class="s" style="left:293px;top:541px;" width="19" height="16" viewBox="0 0 19 16"><path d="M5 6 Q9.5 0.5 14.5 5" fill="none" stroke="#3a7bc8" stroke-width="1.8"/><path d="M12 5.5 L16 5.5 L15.5 2 Z" fill="#3a7bc8"/><text x="5" y="15" font-family="Liberation Sans" font-weight="bold" font-size="10" fill="#3a7bc8" text-anchor="middle">A</text><text x="13.5" y="15" font-family="Liberation Sans" font-weight="bold" font-size="10" fill="#5a9a7a" text-anchor="middle">B</text></svg>
<svg class="s" style="left:324px;top:542px;" width="17" height="13" viewBox="0 0 17 13"><circle cx="8.5" cy="2.5" r="2" fill="#6a9aa0"/><path d="M1.5 3.5 H15.5" stroke="#6a9aa0" stroke-width="1.4"/><path d="M3.5 3.5 L1 8.5 M3.5 3.5 L6 8.5 M13.5 3.5 L11 8.5 M13.5 3.5 L16 8.5" stroke="#6a9aa0" stroke-width="0.9"/><path d="M0.5 8.5 H6.5 Q6.5 11.5 3.5 11.5 Q0.5 11.5 0.5 8.5 Z M10.5 8.5 H16.5 Q16.5 11.5 13.5 11.5 Q10.5 11.5 10.5 8.5 Z" fill="#6a9aa0"/></svg>
<div class="b" style="left:626px;top:521px;width:100px;height:45px;border:1px solid #c8c8c8;border-radius:3px;background:#fcfcfc;border-radius:4px;"></div>
<svg class="s" style="left:632px;top:533px;" width="28" height="21" viewBox="0 0 28 21"><path d="M13 5 L0 11.5 L0 14.5 L13 20 L13 16 L6 13 L13 9.5 Z" fill="#45b0e8"/><path d="M13 5 L0 11.5 L0 13 L6 13 L13 9.5 Z" fill="#2a8ad0"/><path d="M13.2 0 L26.5 6 L26.5 9.5 L13.2 15 L13.2 11.5 L20 8 L13.2 4.5 Z" fill="#48b4e8"/><path d="M26.5 8 L26.5 9.5 L13.2 15 L13.2 11.5 L20 8 Z" fill="#2a8ad0"/></svg>
<div class="t" style="left:662.65px;top:525.40px;font-size:11px;color:#1a1a2a;letter-spacing:-0.209px;">Consolida e</div>
<div class="t" style="left:672.46px;top:538.60px;font-size:11px;color:#1a1a2a;letter-spacing:0.199px;">Invia al</div>
<div class="t" style="left:671.57px;top:551.00px;font-size:11px;color:#1a1a2a;letter-spacing:-0.510px;">RENTRI</div>
<div class="b" style="left:732px;top:494px;width:255px;height:72px;border:1px solid #d8d8d8;"></div>
<div class="t" style="left:740.38px;top:488.00px;font-size:11px;color:#000;letter-spacing:-0.129px;background:#fff;padding:0 2px;margin-left:-2px;">Totali dei movimenti a video</div>
<div class="t" style="left:735.45px;top:505.00px;font-size:11px;color:#1a1a2a;letter-spacing:-0.224px;">Carichi</div>
<div class="t" style="left:735.50px;top:526.60px;font-size:11px;color:#1a1a2a;letter-spacing:-0.271px;">Scarichi</div>
<div class="t" style="left:735.50px;top:549.00px;font-size:11px;color:#1a1a2a;letter-spacing:-0.393px;">Saldo</div>
<div class="b" style="left:777px;top:499px;width:102px;height:21px;background:#efefef;border:1px solid #e2e2e2;border-bottom:1.5px solid #6a6a6a;border-radius:2px;"></div>
<div class="t" style="right:124.64px;top:504.00px;font-size:11px;color:#1a1a2a;letter-spacing:-0.010px;">150,00</div>
<div class="b" style="left:777px;top:521px;width:102px;height:21px;background:#efefef;border:1px solid #e2e2e2;border-bottom:1.5px solid #6a6a6a;border-radius:2px;"></div>
<div class="t" style="right:124.91px;top:525.60px;font-size:11px;color:#1a1a2a;letter-spacing:-0.309px;">0,00</div>
<div class="b" style="left:777px;top:543px;width:102px;height:21px;background:#efefef;border:1px solid #e2e2e2;border-bottom:1.5px solid #6a6a6a;border-radius:2px;"></div>
<div class="t" style="right:124.64px;top:547.40px;font-size:11px;color:#1a1a2a;letter-spacing:-0.010px;">150,00</div>
<div class="t" style="left:883.50px;top:497.00px;font-size:11px;color:#1a1a2a;letter-spacing:-0.185px;">Scaricato</div>
<div class="b" style="left:883px;top:510px;width:102px;height:21px;background:#efefef;border:1px solid #e2e2e2;border-bottom:1.5px solid #6a6a6a;border-radius:2px;"></div>
<div class="t" style="right:19.64px;top:514.50px;font-size:11px;color:#1a1a2a;letter-spacing:-0.010px;">150,00</div>
<div class="t" style="left:883.12px;top:530.40px;font-size:11px;color:#1a1a2a;letter-spacing:0.002px;">Peso Ver. Dest.</div>
<div class="b" style="left:883px;top:543px;width:102px;height:20px;background:#efefef;border:1px solid #e2e2e2;border-bottom:1.5px solid #6a6a6a;border-radius:2px;"></div>
<div class="t" style="right:19.91px;top:547.70px;font-size:11px;color:#1a1a2a;letter-spacing:-0.309px;">0,00</div>
<div class="b" style="left:10px;top:575px;width:103px;height:54px;border:1px solid #d8d8d8;"></div>
<div class="t" style="left:17.51px;top:569.00px;font-size:11px;color:#000;letter-spacing:-0.863px;background:#fff;padding:0 2px;margin-left:-2px;">INGRESSO</div>
<div class="b" style="left:112px;top:575px;width:110px;height:54px;border:1px solid #d8d8d8;"></div>
<div class="t" style="left:119.17px;top:569.00px;font-size:11px;color:#000;letter-spacing:-0.333px;background:#fff;padding:0 2px;margin-left:-2px;">USCITA</div>
<div class="b" style="left:11.5px;top:582.5px;width:99.5px;height:41.5px;border:1px solid #c8c8c8;border-radius:3px;background:#fcfcfc;border-radius:4px;"></div>
<div class="b" style="left:113.5px;top:582.5px;width:107.5px;height:41.5px;border:1px solid #c8c8c8;border-radius:3px;background:#fcfcfc;border-radius:4px;"></div>
<svg class="s" style="left:17px;top:588px;" width="32" height="31" viewBox="0 0 32 31"><path d="M15.7 3.5 V0.6 H29.1 V21.5" fill="none" stroke="#6aa590" stroke-width="1.3"/><path d="M6 4.5 H19 V17.5 H3 Z" fill="#6aa590"/><path d="M1 13 Q3 6 10 3.8 L11 3.8 L5 15 L2 16 Z" fill="#8cc878"/><path d="M19 6.5 H24.5 L28.5 12 V17.5 H19 Z" fill="#6aa590"/><path d="M21 8.5 H23.5 L26 12 H21 Z" fill="#fff"/><text x="13" y="13" font-family="Liberation Sans" font-weight="bold" font-size="9" fill="#fff" text-anchor="middle">C</text><circle cx="7.5" cy="17.8" r="2.2" fill="#999"/><circle cx="14.5" cy="17.8" r="2.2" fill="#999"/><circle cx="23.5" cy="17.8" r="2.2" fill="#999"/><path d="M4 25.5 H14" stroke="#3f7abd" stroke-width="2.2"/><path d="M13 21.5 L18 25.5 L13 29.5 Z" fill="#3f7abd"/></svg>
<svg class="s" style="left:122px;top:588px;" width="32" height="31" viewBox="0 0 32 31"><path d="M0.6 21 V0.6 H15.1 V4" fill="none" stroke="#e05a3a" stroke-width="1.3"/><path d="M6 4.5 H19 V17.5 H3 Z" fill="#6aa590"/><path d="M1 13 Q3 6 10 3.8 L11 3.8 L5 15 L2 16 Z" fill="#8cc878"/><path d="M19 6.5 H24.5 L28.5 12 V17.5 H19 Z" fill="#6aa590"/><path d="M21 8.5 H23.5 L26 12 H21 Z" fill="#fff"/><text x="13" y="13" font-family="Liberation Sans" font-weight="bold" font-size="9" fill="#fff" text-anchor="middle">S</text><circle cx="7.5" cy="17.8" r="2.2" fill="#999"/><circle cx="14.5" cy="17.8" r="2.2" fill="#999"/><circle cx="23.5" cy="17.8" r="2.2" fill="#999"/><path d="M4 25.5 H14" stroke="#3f7abd" stroke-width="2.2"/><path d="M13 21.5 L18 25.5 L13 29.5 Z" fill="#3f7abd"/></svg>
<div class="t" style="left:52.62px;top:591.60px;font-size:11px;color:#1a1a2a;letter-spacing:0.040px;">Form. di</div>
<div class="t" style="left:50.83px;top:604.50px;font-size:11px;color:#1a1a2a;letter-spacing:0.176px;">trasporto</div>
<div class="t" style="left:155.10px;top:591.60px;font-size:11px;color:#1a1a2a;letter-spacing:-0.231px;">Scarico di</div>
<div class="t" style="left:155.84px;top:604.50px;font-size:11px;color:#1a1a2a;letter-spacing:0.201px;">trasporto</div>
</body></html>
